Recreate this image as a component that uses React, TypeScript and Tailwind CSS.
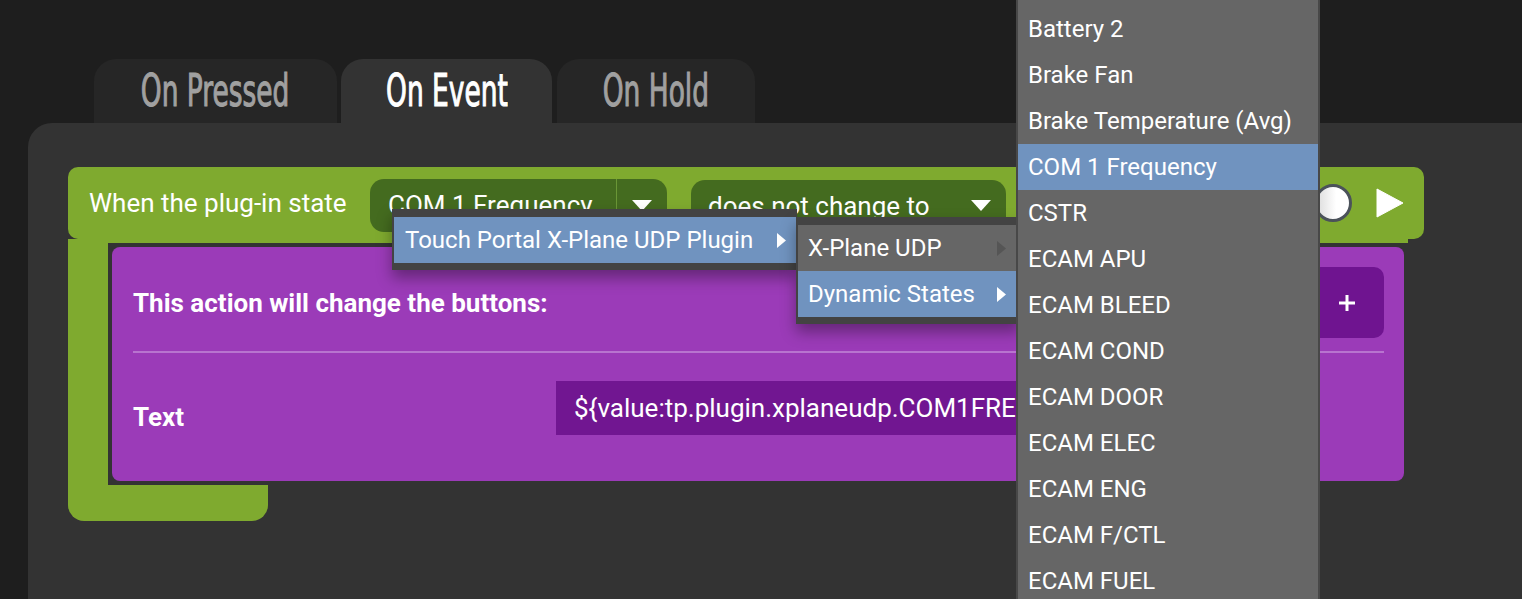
import React from "react";

const GREEN = "bg-[#7faa2f]";

function DownArrow({ w = 20, h = 11 }: { w?: number; h?: number }) {
  return (
    <svg width={w} height={h} viewBox="0 0 20 11">
      <polygon points="0,0 20,0 10,11" fill="#ffffff" />
    </svg>
  );
}

function RightArrow({ color = "#ffffff" }: { color?: string }) {
  return (
    <svg width="9" height="15" viewBox="0 0 9 15">
      <polygon points="0,0 9,7.5 0,15" fill={color} />
    </svg>
  );
}

const tabFont = { fontFamily: '"DejaVu Sans Condensed", "Liberation Sans", sans-serif' };

function Tab({ label, active, w }: { label: string; active?: boolean; w: string }) {
  return (
    <div
      className={`${w} h-[64px] rounded-t-[22px] flex items-center justify-center ${
        active ? "bg-[#333333] text-white" : "bg-[#262626] text-[#a0a0a0]"
      }`}
    >
      <span
        className="inline-block text-[42px] leading-none scale-x-[0.7] scale-y-[1.05] whitespace-nowrap [-webkit-text-stroke:1px_currentColor]"
        style={tabFont}
      >
        {label}
      </span>
    </div>
  );
}

const listItems = [
  "Battery 1",
  "Battery 2",
  "Brake Fan",
  "Brake Temperature (Avg)",
  "COM 1 Frequency",
  "CSTR",
  "ECAM APU",
  "ECAM BLEED",
  "ECAM COND",
  "ECAM DOOR",
  "ECAM ELEC",
  "ECAM ENG",
  "ECAM F/CTL",
  "ECAM FUEL",
  "ECAM HYD",
];

export default function App() {
  return (
    <div
      className="relative w-[1522px] h-[599px] overflow-hidden bg-[#1e1e1e] flex flex-col text-white"
      style={{ fontFamily: 'Roboto, "Liberation Sans", sans-serif' }}
    >
      {/* Tabs */}
      <div className="flex mt-[59px] pl-[94px] shrink-0">
        <Tab label="On Pressed" w="w-[243px]" />
        <div className="w-[4px]" />
        <Tab label="On Event" w="w-[211px]" active />
        <div className="w-[5px]" />
        <Tab label="On Hold" w="w-[198px]" />
      </div>

      {/* Panel */}
      <div className="ml-[28px] flex-1 bg-[#333333] rounded-tl-[24px] pt-[44px] pl-[40px]">
        {/* Green top row */}
        <div className={`w-[1356px] h-[72px] ${GREEN} rounded-[10px] flex items-center pl-[21px] pr-[20px] text-[26px]`}>
          <span className="w-[256px] leading-none whitespace-nowrap">When the plug-in state</span>
          <div className="ml-[25px] mt-[4px] w-[297px] h-[53px] rounded-[14px] bg-[#446b1f] flex items-center">
            <span className="pl-[18px] flex-1 leading-none whitespace-nowrap overflow-hidden">COM 1 Frequency</span>
            <div className="w-px self-stretch bg-[#6a9636]" />
            <div className="w-[50px] flex justify-center shrink-0">
              <DownArrow />
            </div>
          </div>
          <div className="ml-[24px] mt-[5px] w-[315px] h-[51px] rounded-[14px] bg-[#446b1f] flex items-center">
            <span className="pl-[17px] flex-1 leading-none whitespace-nowrap">does not change to</span>
            <div className="pr-[15px]">
              <DownArrow />
            </div>
          </div>
          <div className="flex-1" />
          <div className="w-[38px] h-[38px] rounded-full border-[3px] border-[#4b525a] bg-[linear-gradient(90deg,#dcdcdc,#ffffff_60%)]" />
          <div className="ml-[24px]">
            <svg width="28" height="30" viewBox="0 0 28 30">
              <polygon points="1,1 27,15 1,29" fill="#ffffff" stroke="#ffffff" strokeWidth="1" strokeLinejoin="round" />
            </svg>
          </div>
        </div>

        {/* Green wrapper with purple block */}
        <div className={`w-[1340px] ${GREEN} pl-[40px] pt-[4px]`}>
          <div className="border-4 border-[#333333] bg-[#333333]">
            <div className="h-[234px] rounded-[8px] bg-[#9b3bb8] flex flex-col">
              <div className="flex items-center justify-between pl-[21px] pr-[20px] pt-[20px]">
                <span className="text-[26px] font-bold leading-none">This action will change the buttons:</span>
                <div className="w-[74px] h-[71px] rounded-[10px] bg-[#6f1490] flex items-center justify-center">
                  <svg width="18" height="18" viewBox="0 0 18 18">
                    <path d="M9 1 V17 M1 9 H17" stroke="#ffffff" strokeWidth="3" />
                  </svg>
                </div>
              </div>
              <div className="mt-[13px] ml-[21px] mr-[20px] h-[2px] bg-[#b874cf]" />
              <div className="flex pt-[28px] pl-[21px] pr-[20px]">
                <span className="w-[423px] mt-[22px] text-[26px] font-bold leading-[28px]">Text</span>
                <div className="w-[740px] h-[54px] bg-[#711691] flex items-center pl-[18px] text-[26px] whitespace-nowrap overflow-hidden">
                  {"${value:tp.plugin.xplaneudp.COM1FREQUENCY}"}
                </div>
              </div>
            </div>
          </div>
        </div>

        {/* Green bottom foot */}
        <div className={`w-[200px] h-[36px] ${GREEN} rounded-b-[16px]`} />
      </div>

      {/* Cascading menu 1 */}
      <div className="absolute left-[392px] top-[209px] w-[405px] bg-[#434343] pt-[8px] pb-[7px] pl-[2px] pr-[1px] shadow-[0_8px_14px_rgba(0,0,0,0.35)]">
        <div className="h-[46px] bg-[#7093bf] flex items-center pl-[11px] pr-[10px] text-[24px]">
          <span className="flex-1 leading-none whitespace-nowrap">Touch Portal X-Plane UDP Plugin</span>
          <RightArrow />
        </div>
      </div>

      {/* Cascading menu 2 */}
      <div className="absolute left-[796px] top-[217px] w-[224px] bg-[#434343] pt-[8px] pb-[7px] pl-[2px] shadow-[0_8px_14px_rgba(0,0,0,0.35)]">
        <div className="h-[46px] bg-[#666666] flex items-center pl-[10px] pr-[14px] text-[24px]">
          <span className="flex-1 leading-none whitespace-nowrap">X-Plane UDP</span>
          <RightArrow color="#555555" />
        </div>
        <div className="h-[46px] bg-[#7093bf] flex items-center pl-[10px] pr-[14px] text-[24px]">
          <span className="flex-1 leading-none whitespace-nowrap">Dynamic States</span>
          <RightArrow />
        </div>
      </div>

      {/* Long list menu */}
      <div className="absolute left-[1016px] top-[-40px] w-[304px] bg-[#666666] border-x-2 border-[#484848]">
        {listItems.map((t) => (
          <div
            key={t}
            className={`h-[46px] flex items-center pl-[10px] text-[24px] whitespace-nowrap ${
              t === "COM 1 Frequency" ? "bg-[#7093bf]" : ""
            }`}
          >
            <span className="leading-none">{t}</span>
          </div>
        ))}
      </div>
    </div>
  );
}
